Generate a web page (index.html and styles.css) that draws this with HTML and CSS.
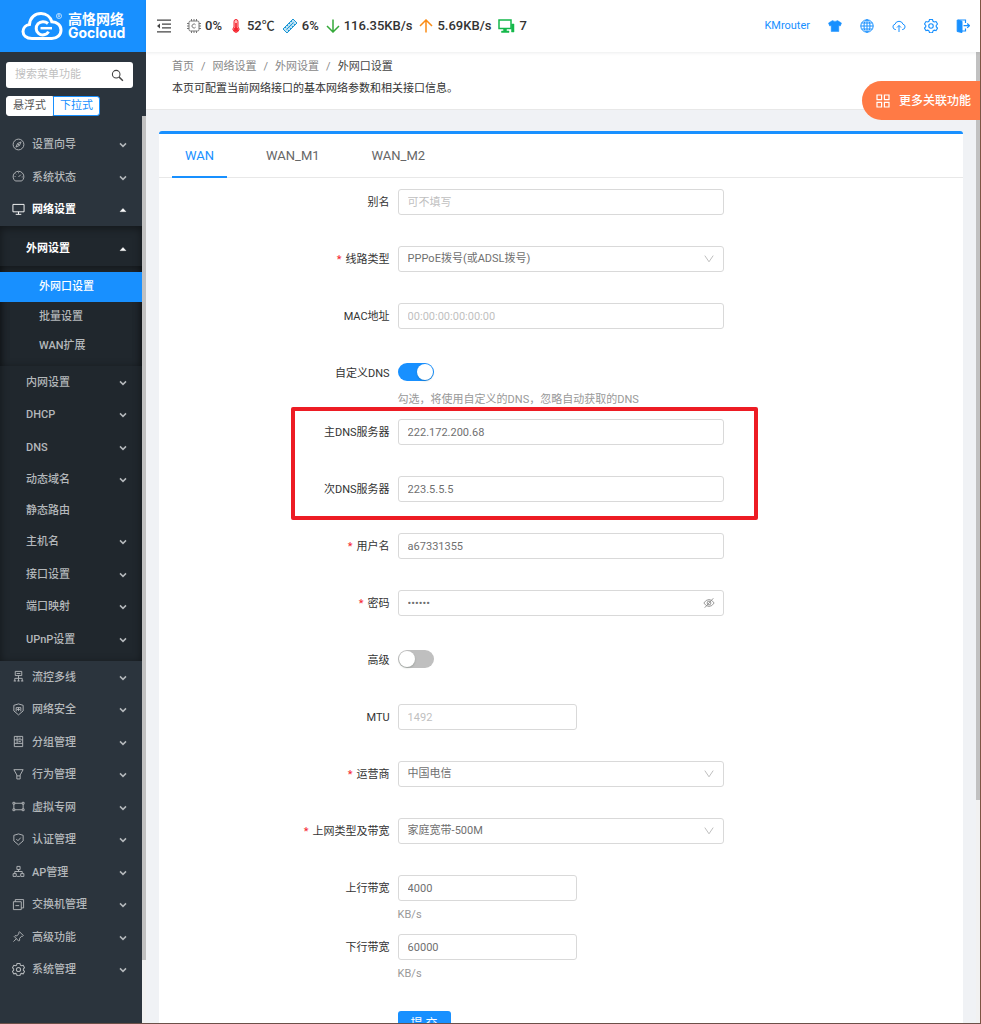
FILE: index.html
```
<!DOCTYPE html>
<html lang="zh-CN">
<head>
    <meta charset="UTF-8">
    <meta name="viewport" content="width=device-width, initial-scale=1.0">
    <title>外网口设置</title>
    <link rel="stylesheet" href="styles.css">
</head>
<body>

    <!-- shared icons -->
    <svg class="sprite" aria-hidden="true">
        <symbol id="i-down" viewBox="0 0 8 8"><path d="M1 2.4 4 5.4 7 2.4" stroke-width="1.5"/></symbol>
        <symbol id="i-up" viewBox="0 0 8 8"><path d="M1.2 5.6 4 2.6 6.8 5.6Z" fill="currentColor" stroke-width=".6"/></symbol>
        <symbol id="i-arrow" viewBox="0 0 12 12"><path d="M1.8 2.6 6 8.8 10.2 2.6"/></symbol>
        <symbol id="i-gear" viewBox="0.5 1 15 15"><path d="M6.400 1.500h3.200l.6 2 1.200.7 2-.5 1.600 2.700-1.400 1.500v1.400l1.400 1.500-1.600 2.700-2-.5-1.200.7-.6 2H6.400l-.6-2-1.200-.7-2 .5L1 10.800l1.400-1.500V7.900L1 6.400l1.600-2.700 2 .5 1.200-.7Z" stroke-width="1.200"/><circle cx="8" cy="8.500" r="2.400" stroke-width="1.200"/></symbol>
    </svg>

    <div class="app">

        <aside class="sidebar">
            <div class="logo">
                <svg class="logo-mark" viewBox="0 0 42 30">
                    <path d="M11 27.500C5 27.500 2 24 2 20.500c0-4 3-6.500 6.500-7C9 6.500 14 2.500 20 2.500c5.500 0 9.500 3.500 10.800 8.200 5.200.3 9.200 3.500 9.200 8.300 0 5-4 8.500-9.200 8.500Z" fill="none" stroke="#fff" stroke-width="3"/>
                    <path d="M27 12.500c-3-2.600-7.500-2.400-10 .3-2.600 2.900-2.300 7.300.5 9.600 3 2.500 8 1.900 10-1.800" fill="none" stroke="#fff" stroke-width="3"/>
                    <path d="M19.500 17.200H31" stroke="#fff" stroke-width="2.500"/>
                    <circle cx="38" cy="5" r="2.600" fill="none" stroke="#fff" stroke-width=".6"/>
                    <path d="M37.200 6.500v-3h1q.8.1.8.8t-.8.8h-1m1 0 .9 1.400" fill="none" stroke="#fff" stroke-width=".5"/>
                </svg>
                <div class="logo-text">
                    <span>高恪网络</span>
                    <span class="logo-en">Gocloud</span>
                </div>
            </div>

            <div class="menu-tools">
                <div class="search">
                    <input type="text" placeholder="搜索菜单功能" aria-label="搜索菜单功能">
                    <svg class="icon" viewBox="0 0 12 12"><circle cx="4.800" cy="4.800" r="3.500"/><path d="m7.500 7.500 3.500 3.300" stroke-width="1.300"/></svg>
                </div>
                <div class="mode">
                    <button type="button">悬浮式</button>
                    <button type="button" class="on">下拉式</button>
                </div>
            </div>

            <div class="menu-area">
                <ul class="menu">
                    <li><a class="item" href="#"><svg class="icon" viewBox="0 0 14 14"><circle cx="7" cy="7" r="5.800"/><path d="M9.800 4.200 8 8 4.200 9.800 6 6ZM6 6l2 2"/></svg><span>设置向导</span><svg class="caret"><use href="#i-down"/></svg></a></li>
                    <li><a class="item" href="#"><svg class="icon" viewBox="0 0 14 14"><path d="M3.500 11.800a5.800 5.800 0 1 1 7 0ZM7 7.500l2.500-2.500M7 2.500v1M2.800 7h1M10.500 7.500h1M4 4l.6.6"/></svg><span>系统状态</span><svg class="caret"><use href="#i-down"/></svg></a></li>
                    <li class="open">
                        <a class="item active" href="#"><svg class="icon" viewBox="0 0 14 14"><path d="M1 1.500h12v8H1ZM7 9.500v2.500M4 12.200h6"/></svg><span>网络设置</span><svg class="caret"><use href="#i-up"/></svg></a>
                        <ul class="submenu">
                            <li class="open">
                                <a class="item active" href="#"><span>外网设置</span><svg class="caret"><use href="#i-up"/></svg></a>
                                <ul class="leafs">
                                    <li><a class="current" href="#">外网口设置</a></li>
                                    <li><a href="#">批量设置</a></li>
                                    <li><a href="#">WAN扩展</a></li>
                                </ul>
                            </li>
                            <li><a class="item" href="#"><span>内网设置</span><svg class="caret"><use href="#i-down"/></svg></a></li>
                            <li><a class="item" href="#"><span>DHCP</span><svg class="caret"><use href="#i-down"/></svg></a></li>
                            <li><a class="item" href="#"><span>DNS</span><svg class="caret"><use href="#i-down"/></svg></a></li>
                            <li><a class="item" href="#"><span>动态域名</span><svg class="caret"><use href="#i-down"/></svg></a></li>
                            <li class="plain"><a class="item" href="#"><span>静态路由</span></a></li>
                            <li><a class="item" href="#"><span>主机名</span><svg class="caret"><use href="#i-down"/></svg></a></li>
                            <li><a class="item" href="#"><span>接口设置</span><svg class="caret"><use href="#i-down"/></svg></a></li>
                            <li><a class="item" href="#"><span>端口映射</span><svg class="caret"><use href="#i-down"/></svg></a></li>
                            <li><a class="item" href="#"><span>UPnP设置</span><svg class="caret"><use href="#i-down"/></svg></a></li>
                        </ul>
                    </li>
                    <li><a class="item" href="#"><svg class="icon" viewBox="0 0 14 14"><path d="M3.500 1.500h7v4.500h-7ZM5 3.800h4M7 6v3M3 12V9h8v3M1.800 11.800h2.600M5.700 11.800h2.600M9.600 11.800h2.600M7 9v3"/></svg><span>流控多线</span><svg class="caret"><use href="#i-down"/></svg></a></li>
                    <li><a class="item" href="#"><svg class="icon" viewBox="0 0 14 14"><path d="M7 1 12 2.500v6L7 12.800 2 8.500v-6ZM4.500 5h5v4M4.500 5v4M7 5v3.500M5.500 7h3"/></svg><span>网络安全</span><svg class="caret"><use href="#i-down"/></svg></a></li>
                    <li><a class="item" href="#"><svg class="icon" viewBox="0 0 14 14"><path d="M2.500 1.500h9v11h-9ZM2.500 5.200h9M2.500 9h9M5.500 1.500V9M7 3.400h2.500M7 7.100h2.500"/></svg><span>分组管理</span><svg class="caret"><use href="#i-down"/></svg></a></li>
                    <li><a class="item" href="#"><svg class="icon" viewBox="0 0 14 14"><path d="M2 1.800h10L8.800 7.500v4.300H5.200V7.500ZM5.200 8.500h3.600"/></svg><span>行为管理</span><svg class="caret"><use href="#i-down"/></svg></a></li>
                    <li><a class="item" href="#"><svg class="icon" viewBox="0 0 14 14"><path d="M1 2.500h2v2H1ZM11 2.500h2v2h-2ZM1 9.500h2v2H1ZM11 9.500h2v2h-2ZM3 3.500h8M3 10.500h8M2 4.500v5M12 4.500v5"/></svg><span>虚拟专网</span><svg class="caret"><use href="#i-down"/></svg></a></li>
                    <li><a class="item" href="#"><svg class="icon" viewBox="0 0 14 14"><path d="M7 1 12 2.500v6L7 12.800 2 8.500v-6ZM4.600 6.500l1.800 1.800 3-3.300"/></svg><span>认证管理</span><svg class="caret"><use href="#i-down"/></svg></a></li>
                    <li><a class="item" href="#"><svg class="icon" viewBox="0 0 14 14"><path d="M5.300 1.500h3.400v3.400H5.300ZM1.200 9.300h3.400v3H1.200ZM9.400 9.300h3.400v3H9.400ZM7 5v2M3 9.300V7h8v2.300M5.500 12.300h3"/></svg><span>AP管理</span><svg class="caret"><use href="#i-down"/></svg></a></li>
                    <li><a class="item" href="#"><svg class="icon" viewBox="0 0 14 14"><path d="M1.500 4h8.500v8.500H1.500ZM3.500 4V1.700h9v9H10M3.700 8.200h4"/></svg><span>交换机管理</span><svg class="caret"><use href="#i-down"/></svg></a></li>
                    <li><a class="item" href="#"><svg class="icon" viewBox="0 0 14 14"><path d="m8 1.800 4.200 4.200-1 .8-1 0-2 2.300v2L7.300 12 2.400 7l.8-.8h2l2.200-2V2.600ZM4.800 9.300 1.600 12.500"/></svg><span>高级功能</span><svg class="caret"><use href="#i-down"/></svg></a></li>
                    <li><a class="item" href="#"><svg class="icon"><use href="#i-gear"/></svg><span>系统管理</span><svg class="caret"><use href="#i-down"/></svg></a></li>
                </ul>
                <div class="track"><div class="thumb thumb-menu"></div></div>
            </div>
        </aside>

        <div class="main">
            <header class="topbar">
                <svg class="icon fold" viewBox="0 0 16 14"><path d="M1 1.200h14M6 5.100h9M6 8.900h9M1 12.800h14" stroke-width="1.200"/><path d="M4 4.500v5L1 7Z" fill="currentColor" stroke="none"/></svg>
                <ul class="stats">
                    <li><svg class="icon chip" viewBox="0 0 14 14"><rect x="2" y="2" width="10" height="10" rx="1.500"/><path d="M4.500 0v2M7 0v2M9.500 0v2M4.500 12v2M7 12v2M9.500 12v2M0 4.500h2M0 7h2M0 9.500h2M12 4.500h2M12 7h2M12 9.500h2M8.600 5.800a2 2 0 1 0 0 2.400"/></svg>0%</li>
                    <li><svg class="icon heat" viewBox="0 0 10 14"><path d="M3 8V2.500a2 2 0 0 1 4 0V8a3 3 0 1 1-4 0Z" fill="#fbb"/><path d="M5 4v6" stroke-width="1.600"/><circle cx="5" cy="10.500" r="1.800" fill="currentColor"/></svg>52℃</li>
                    <li><svg class="icon ram" viewBox="0 0 16 16"><path d="m1 11 10-10 4 4L5 15ZM4.500 11.500l7-7M3 9l1.200 1.200M5 7l1.200 1.200M7 5l1.200 1.200M9 3l1.200 1.200M7 13l-1.200-1.200M9 11 7.800 9.800M11 9 9.800 7.800M13 7l-1.200-1.200" fill="#bfe3f5"/></svg>6%</li>
                    <li><svg class="icon rx" viewBox="0 0 14 14"><path d="M7 .5v12.500M1 7l6 6 6-6"/></svg>116.35KB/s</li>
                    <li><svg class="icon tx" viewBox="0 0 14 14"><path d="M7 13.500V1M1 7l6-6 6 6"/></svg>5.69KB/s</li>
                    <li><svg class="icon pc" viewBox="0 0 17 14"><path d="M1 1h12v8.500H1Z" stroke-width="1.500"/><path d="M5.500 9.500h3v2.500H11v1.500H3.500V12h2ZM13.500 5H16v8h-2.500Z" fill="currentColor" stroke-width=".5"/></svg>7</li>
                </ul>
                <nav class="actions">
                    <a href="#">KMrouter</a>
                    <a href="#" aria-label="主题"><svg class="icon" viewBox="0 0 14 14"><path d="M4.500 1.500q2.500 1.800 5 0L13.500 4l-1.200 3-1.500-.5v6H3.200v-6L1.700 7 .5 4Z" fill="currentColor" stroke-width=".5"/></svg></a>
                    <a href="#" aria-label="语言"><svg class="icon" viewBox="0 0 14 14"><circle cx="7" cy="7" r="6.200"/><ellipse cx="7" cy="7" rx="3" ry="6.200"/><path d="M7 .8v12.400M.8 7h12.400M1.600 4h10.800M1.600 10h10.800"/></svg></a>
                    <a href="#" aria-label="升级"><svg class="icon" viewBox="0 0 14 14"><path d="M4 10.500H3.300A2.700 2.700 0 0 1 3 5.200a4.200 4.200 0 0 1 8 0 2.700 2.700 0 0 1-.3 5.300H10M7 13V6.500M5 8.500l2-2 2 2"/></svg></a>
                    <a href="#" aria-label="设置"><svg class="icon"><use href="#i-gear"/></svg></a>
                    <a href="#" aria-label="退出"><svg class="icon" viewBox="0 0 14 14"><path d="M1.200 1 6 2.200v11.300L1.200 12.500Z" fill="currentColor"/><path d="M2 1h7.500v3M6 12h3.500v-2.500M7.500 6.700h6M11.200 4.500l2.300 2.200-2.300 2.200" stroke-width="1.200"/></svg></a>
                </nav>
            </header>

            <div class="view">
                <div class="page">
                    <div class="page-head">
                        <nav class="crumbs">
                            <a href="#">首页</a><i>/</i><a href="#">网络设置</a><i>/</i><a href="#">外网设置</a><i>/</i><span>外网口设置</span>
                        </nav>
                        <p>本页可配置当前网络接口的基本网络参数和相关接口信息。</p>
                    </div>

                    <section class="card">
                        <div class="tabs">
                            <button type="button" class="tab on">WAN</button>
                            <button type="button" class="tab">WAN_M1</button>
                            <button type="button" class="tab">WAN_M2</button>
                        </div>

                        <form class="form">
                            <div class="row">
                                <label for="alias">别名</label>
                                <div class="field"><input type="text" id="alias" placeholder="可不填写"></div>
                            </div>
                            <div class="row">
                                <label class="must" for="line">线路类型</label>
                                <div class="field">
                                    <select id="line"><option>PPPoE拨号(或ADSL拨号)</option></select>
                                    <svg class="suffix"><use href="#i-arrow"/></svg>
                                </div>
                            </div>
                            <div class="row">
                                <label for="mac">MAC地址</label>
                                <div class="field"><input type="text" id="mac" placeholder="00:00:00:00:00:00"></div>
                            </div>
                            <div class="row has-hint">
                                <label for="dns">自定义DNS</label>
                                <div class="field"><input type="checkbox" class="switch" id="dns" checked></div>
                                <p class="hint">勾选，将使用自定义的DNS，忽略自动获取的DNS</p>
                            </div>

                            <div class="dns-group">
                                <div class="row">
                                    <label for="dns1">主DNS服务器</label>
                                    <div class="field"><input type="text" id="dns1" value="222.172.200.68"></div>
                                </div>
                                <div class="row">
                                    <label for="dns2">次DNS服务器</label>
                                    <div class="field"><input type="text" id="dns2" value="223.5.5.5"></div>
                                </div>
                                <div class="mark"></div>
                            </div>

                            <div class="row">
                                <label class="must" for="user">用户名</label>
                                <div class="field"><input type="text" id="user" value="a67331355"></div>
                            </div>
                            <div class="row">
                                <label class="must" for="pwd">密码</label>
                                <div class="field">
                                    <input type="password" id="pwd" value="123456">
                                    <svg class="suffix eye" viewBox="0 0 14 14"><path d="M1 7q2.500-4 6-4t6 4q-2.500 4-6 4T1 7ZM12 1.500l-10 11"/><circle cx="7" cy="7" r="2.200"/></svg>
                                </div>
                            </div>
                            <div class="row">
                                <label for="adv">高级</label>
                                <div class="field"><input type="checkbox" class="switch" id="adv"></div>
                            </div>
                            <div class="row">
                                <label for="mtu">MTU</label>
                                <div class="field"><input type="text" class="short" id="mtu" placeholder="1492"></div>
                            </div>
                            <div class="row">
                                <label class="must" for="isp">运营商</label>
                                <div class="field">
                                    <select id="isp"><option>中国电信</option></select>
                                    <svg class="suffix"><use href="#i-arrow"/></svg>
                                </div>
                            </div>
                            <div class="row">
                                <label class="must" for="band">上网类型及带宽</label>
                                <div class="field">
                                    <select id="band"><option>家庭宽带-500M</option></select>
                                    <svg class="suffix"><use href="#i-arrow"/></svg>
                                </div>
                            </div>
                            <div class="row has-hint">
                                <label for="upbw">上行带宽</label>
                                <div class="field"><input type="text" class="short" id="upbw" value="4000"></div>
                                <p class="hint">KB/s</p>
                            </div>
                            <div class="row has-hint">
                                <label for="downbw">下行带宽</label>
                                <div class="field"><input type="text" class="short" id="downbw" value="60000"></div>
                                <p class="hint">KB/s</p>
                            </div>
                            <div class="row submit-row">
                                <button type="submit" class="submit">提 交</button>
                            </div>
                        </form>
                    </section>
                </div>
                <div class="track"><div class="thumb thumb-page"></div></div>
            </div>
        </div>

        <button type="button" class="more">
            <svg class="icon" viewBox="0 0 14 14"><path d="M1 1h4.600v4.600H1ZM8.400 1H13v4.600H8.400ZM1 8.400h4.600V13H1ZM8.400 8.400H13V13H8.400Z" stroke-width="1.200"/></svg>
            更多关联功能
        </button>
    </div>

</body>
</html>
```

FILE: styles.css
```
* {
    box-sizing: border-box;
}
body {
    margin: 0;
    font-family: Roboto, "Noto Sans CJK SC", sans-serif;
    font-size: 11px;
    line-height: 16px;
    color: #333;
}
ul, p {
    margin: 0;
    padding: 0;
    list-style: none;
}
a {
    color: inherit;
    text-decoration: none;
}
button, input, select {
    font: inherit;
    color: inherit;
    cursor: pointer;
}
svg {
    fill: none;
    stroke: currentColor;
    flex: none;
}
.sprite {
    display: none;
}
.icon {
    width: 13px;
    height: 13px;
}
.app {
    position: relative;
    display: flex;
    height: 100vh;
    overflow: hidden;
    border-right: 1px solid #7d5443;
    border-bottom: 1px solid #6b5048;
}

/* sidebar */
.sidebar {
    display: flex;
    flex-direction: column;
    flex: none;
    width: 146px;
    background: #2b343d;
    color: #b4b8bb;
}
.logo {
    display: flex;
    align-items: center;
    gap: 5px;
    height: 52px;
    flex: none;
    padding-left: 21px;
    background: #1890ff;
    color: #fff;
}
.logo-mark {
    width: 42px;
    height: 30px;
    stroke: none;
}
.logo-text {
    display: flex;
    flex-direction: column;
    font-size: 14px;
    line-height: 14px;
    font-weight: 700;
}
.logo-en {
    font-family: Inter, sans-serif;
}
.menu-tools {
    display: flex;
    flex-direction: column;
    gap: 8px;
    padding: 10px 13px 0 6px;
}
.search {
    display: flex;
    align-items: center;
    height: 26px;
    padding: 0 9px;
    background: #fff;
    border-radius: 3px;
    color: #444;
}
.search input {
    flex: 1;
    min-width: 0;
    padding: 0;
    border: 0;
    outline: none;
    background: none;
}
::placeholder {
    color: #bfbfbf;
}
.mode {
    display: flex;
}
.mode button {
    width: 47px;
    height: 20px;
    padding: 0;
    background: #fff;
    border: 1px solid #fff;
    border-radius: 3px 0 0 3px;
    color: #555;
    line-height: 18px;
}
.mode .on {
    border-color: #1890ff;
    border-radius: 0 3px 3px 0;
    color: #1890ff;
}
.menu-area {
    display: flex;
    flex: 1;
    min-height: 0;
}
.menu {
    flex: 1;
    padding-top: 13px;
    overflow: hidden;
    font-weight: 500;
}
.item {
    display: flex;
    align-items: center;
    gap: 7px;
    height: 32px;
    padding: 0 15px 0 12px;
}
li:nth-child(even) > .item {
    height: 33px;
}
.plain > .item,
.plain:nth-child(even) > .item {
    height: 30px;
}
.item .icon {
    margin-bottom: 2px;
}
.item.active {
    color: #fff;
    font-weight: 700;
}
.caret {
    width: 8px;
    height: 8px;
    margin-left: auto;
}
.submenu {
    padding: 5px 0;
    background: #20272d;
    box-shadow: inset 0 2px 8px rgba(0, 0, 0, 0.45);
}
.submenu .item {
    padding-left: 26px;
}
.submenu .item.active {
    height: 35px;
}
.leafs {
    padding: 6px 0;
    box-shadow: inset 0 2px 8px rgba(0, 0, 0, 0.45);
}
.leafs a {
    display: block;
    height: 29px;
    padding-left: 39px;
    line-height: 29px;
}
.leafs .current {
    height: 30px;
    background: #1890ff;
    color: #fff;
}
.track {
    flex: none;
    width: 4px;
    background: #f1f1f1;
}
.thumb {
    background: #c1c1c1;
}
.thumb-menu {
    height: 93%;
}
.thumb-page {
    height: 77%;
}

/* top bar */
.main {
    display: flex;
    flex-direction: column;
    flex: 1;
    min-width: 0;
}
.topbar {
    position: relative;
    display: flex;
    align-items: center;
    flex: none;
    height: 52px;
    padding: 0 10px;
    background: #fff;
    box-shadow: 0 1px 3px rgba(0, 21, 41, 0.08);
}
.fold {
    width: 16px;
    height: 14px;
    color: #444;
}
.stats {
    display: flex;
    gap: 7px;
    margin-left: 15px;
    font-size: 13px;
    font-weight: 500;
}
.stats li {
    display: flex;
    align-items: center;
    gap: 4px;
}
.stats .icon {
    width: 14px;
    height: 14px;
}
.stats .chip {
    color: #777;
}
.stats .heat {
    color: #f5222d;
}
.stats .ram {
    width: 16px;
    height: 16px;
    color: #1c96d4;
}
.stats .rx {
    color: #35a93a;
    stroke-width: 1.5;
}
.stats .tx {
    color: #fa8c16;
    stroke-width: 1.5;
}
.stats .pc {
    width: 17px;
    color: #14b84b;
}
.actions {
    display: flex;
    align-items: center;
    gap: 18px;
    margin-left: auto;
    color: #1890ff;
}
.actions a {
    display: flex;
}
.actions .icon {
    width: 14px;
    height: 14px;
}

/* page */
.view {
    display: flex;
    flex: 1;
    min-height: 0;
}
.page {
    flex: 1;
    min-width: 0;
    overflow: hidden;
    background: #f0f2f5;
}
.page-head {
    display: flex;
    flex-direction: column;
    gap: 6px;
    height: 58px;
    padding: 7px 26px;
    background: #fff;
    border-bottom: 1px solid #e8e8e8;
}
.crumbs {
    display: flex;
    gap: 7px;
    color: #888;
}
.crumbs i {
    font-style: normal;
}
.crumbs span {
    color: #444;
}
.card {
    margin: 21px 13px 0;
    background: #fff;
    border-top: 3px solid #1890ff;
    border-radius: 3px 3px 0 0;
}
.tabs {
    display: flex;
    gap: 26px;
    padding: 0 13px;
    border-bottom: 1px solid #e8e8e8;
}
.tab {
    height: 44px;
    margin-bottom: -1px;
    padding: 2px 13px 0;
    background: none;
    border: 0;
    border-bottom: 2px solid transparent;
    color: #666;
    font-size: 13px;
}
.tab.on {
    border-color: #1890ff;
    color: #1890ff;
}
.form {
    padding: 11px 13px;
}
.row {
    display: grid;
    grid-template-columns: 29% 42%;
    margin-bottom: 31px;
}
.row.has-hint {
    margin-bottom: 10px;
}
.row label {
    height: 26px;
    padding-right: 8px;
    line-height: 28px;
    text-align: right;
}
.must::before {
    content: "*";
    margin-right: 4px;
    color: #f5222d;
}
.field {
    position: relative;
    display: flex;
    align-items: center;
    height: 26px;
    color: #707070;
}
.field input[type="text"],
.field input[type="password"],
.field select {
    width: 100%;
    height: 26px;
    padding: 0 9px;
    appearance: none;
    background: #fff;
    border: 1px solid #d9d9d9;
    border-radius: 3px;
    outline: none;
}
.field input.short {
    width: 55%;
}
.suffix {
    position: absolute;
    right: 9px;
    width: 12px;
    height: 12px;
    color: #bfbfbf;
    pointer-events: none;
}
.eye {
    color: #888;
}
.switch {
    appearance: none;
    width: 36px;
    height: 18px;
    margin: 0 0 2px;
    padding: 1px;
    border-radius: 9px;
    background: #bfbfbf;
}
.switch::before {
    content: "";
    display: block;
    width: 16px;
    height: 16px;
    border-radius: 50%;
    background: #fff;
    box-shadow: 0 1px 2px rgba(0, 35, 11, 0.2);
}
.switch:checked {
    background: #1890ff;
}
.switch:checked::before {
    margin-left: auto;
}
.hint {
    grid-column: 2;
    margin-top: 5px;
    line-height: 18px;
    color: #999;
}
.dns-group {
    position: relative;
}
/* highlight round the two DNS rows */
.mark {
    position: absolute;
    top: -12px;
    bottom: -18px;
    left: 119px;
    right: 192px;
    border: 4px solid #ed1c24;
    border-radius: 2px;
    pointer-events: none;
}
.submit-row {
    margin-top: 28px;
}
.submit {
    grid-column: 2;
    justify-self: start;
    width: 53px;
    height: 26px;
    padding: 0;
    border: 0;
    border-radius: 3px;
    background: #1890ff;
    color: #fff;
    font-size: 12px;
}

/* floating button */
.more {
    position: absolute;
    top: 81px;
    right: 0;
    display: flex;
    align-items: center;
    gap: 9px;
    height: 39px;
    padding: 0 9px 0 14px;
    border: 0;
    border-radius: 20px 0 0 20px;
    background: #ff7a45;
    color: #fff;
    font-size: 12px;
    font-weight: 500;
}
.more .icon {
    width: 14px;
    height: 14px;
}
```
